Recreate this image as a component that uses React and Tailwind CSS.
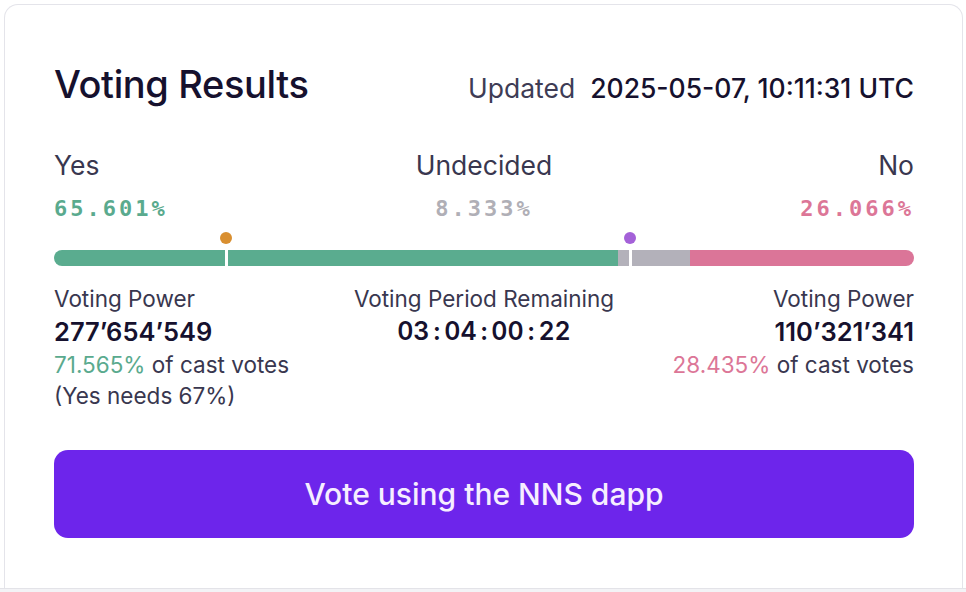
import React from "react";

const SANS = { fontFamily: "Inter, 'Noto Sans', sans-serif" };

const VotingBar = ({ yes, undecided }) => {
  return (
    <div className="relative pt-[18px]">
      <div className="flex h-4 w-full overflow-hidden rounded-full">
        <div className="h-full bg-[#5aac8f]" style={{ width: `${yes}%` }} />
        <div className="h-full bg-[#b3b1ba]" style={{ width: `${undecided}%` }} />
        <div className="h-full flex-1 bg-[#db7598]" />
      </div>
      <div className="absolute top-0 bottom-0 left-[20%] flex -translate-x-1/2 flex-col items-center">
        <span className="h-3 w-3 rounded-full bg-[#d98f30]" />
        <span className="mt-[6px] w-[3px] flex-1 bg-white" />
      </div>
      <div className="absolute top-0 bottom-0 left-[67%] flex -translate-x-1/2 flex-col items-center">
        <span className="h-3 w-3 rounded-full bg-[#a461d8]" />
        <span className="mt-[6px] w-[3px] flex-1 bg-white" />
      </div>
    </div>
  );
};

const Countdown = ({ parts }) => (
  <p className="flex justify-center text-[25px] font-semibold tabular-nums text-[#16112e]">
    {parts.map((part, i) => (
      <React.Fragment key={i}>
        {i > 0 && <span className="mx-[4px]">:</span>}
        <span>{part}</span>
      </React.Fragment>
    ))}
  </p>
);

export default function App() {
  return (
    <div className="min-h-screen bg-white" style={SANS}>
      <div className="ml-[4px] mr-[3px] mt-[4px] h-[584px] rounded-t-[14px] border border-b-0 border-[#e4e4ea] bg-white pl-[49px] pr-[48px] pt-[51px]">
        <div className="flex items-baseline justify-between">
          <h1 className="text-[38px] font-medium tracking-[-0.01em] text-[#16112e]">Voting Results</h1>
          <p className="text-[26.5px] text-[#3e3c55]">
            Updated<span className="ml-[15px] font-medium text-[#16112e]">2025-05-07, 10:11:31 UTC</span>
          </p>
        </div>

        <div className="mt-[36px] grid grid-cols-3 text-[26.5px] leading-[32px] text-[#39374f]">
          <span>Yes</span>
          <span className="text-center">Undecided</span>
          <span className="text-right">No</span>
        </div>
        <div
          className="mt-[15px] grid grid-cols-3 text-[22px] font-bold leading-[26px] tracking-[3px]"
          style={{ fontFamily: "'DejaVu Sans Mono', 'Liberation Mono', monospace" }}
        >
          <span className="text-[#5aaa8e]">65.601%</span>
          <span className="text-center text-[#b0afb6]">8.333%</span>
          <span className="text-right text-[#dc7697]">26.066%</span>
        </div>

        <div className="mt-[10px]">
          <VotingBar yes={65.601} undecided={8.333} />
        </div>

        <div className="mt-[17px] grid grid-cols-3 text-[22.5px] leading-[31px] text-[#39374f]">
          <div>
            <p>Voting Power</p>
            <p className="text-[25.5px] leading-[35px] font-semibold text-[#16112e]">277’654’549</p>
            <p>
              <span className="text-[#5aaa8e]">71.565%</span> of cast votes
            </p>
            <p>(Yes needs 67%)</p>
          </div>
          <div className="text-center">
            <p className="whitespace-nowrap">Voting Period Remaining</p>
            <div className="leading-[35px]">
              <Countdown parts={["03", "04", "00", "22"]} />
            </div>
          </div>
          <div className="text-right">
            <p>Voting Power</p>
            <p className="text-[25.5px] leading-[35px] font-semibold text-[#16112e]">110’321’341</p>
            <p>
              <span className="text-[#dc7697]">28.435%</span> of cast votes
            </p>
          </div>
        </div>

        <button
          type="button"
          className="mt-[39px] flex h-[88px] w-full items-center justify-center rounded-[14px] bg-[#6d25eb] text-[30px] font-medium text-[#f6eeff]"
        >
          Vote using the NNS dapp
        </button>
      </div>
      <div className="h-[4px] border-t border-[#e3e3e8] bg-[#f3f3f6]" />
    </div>
  );
}
